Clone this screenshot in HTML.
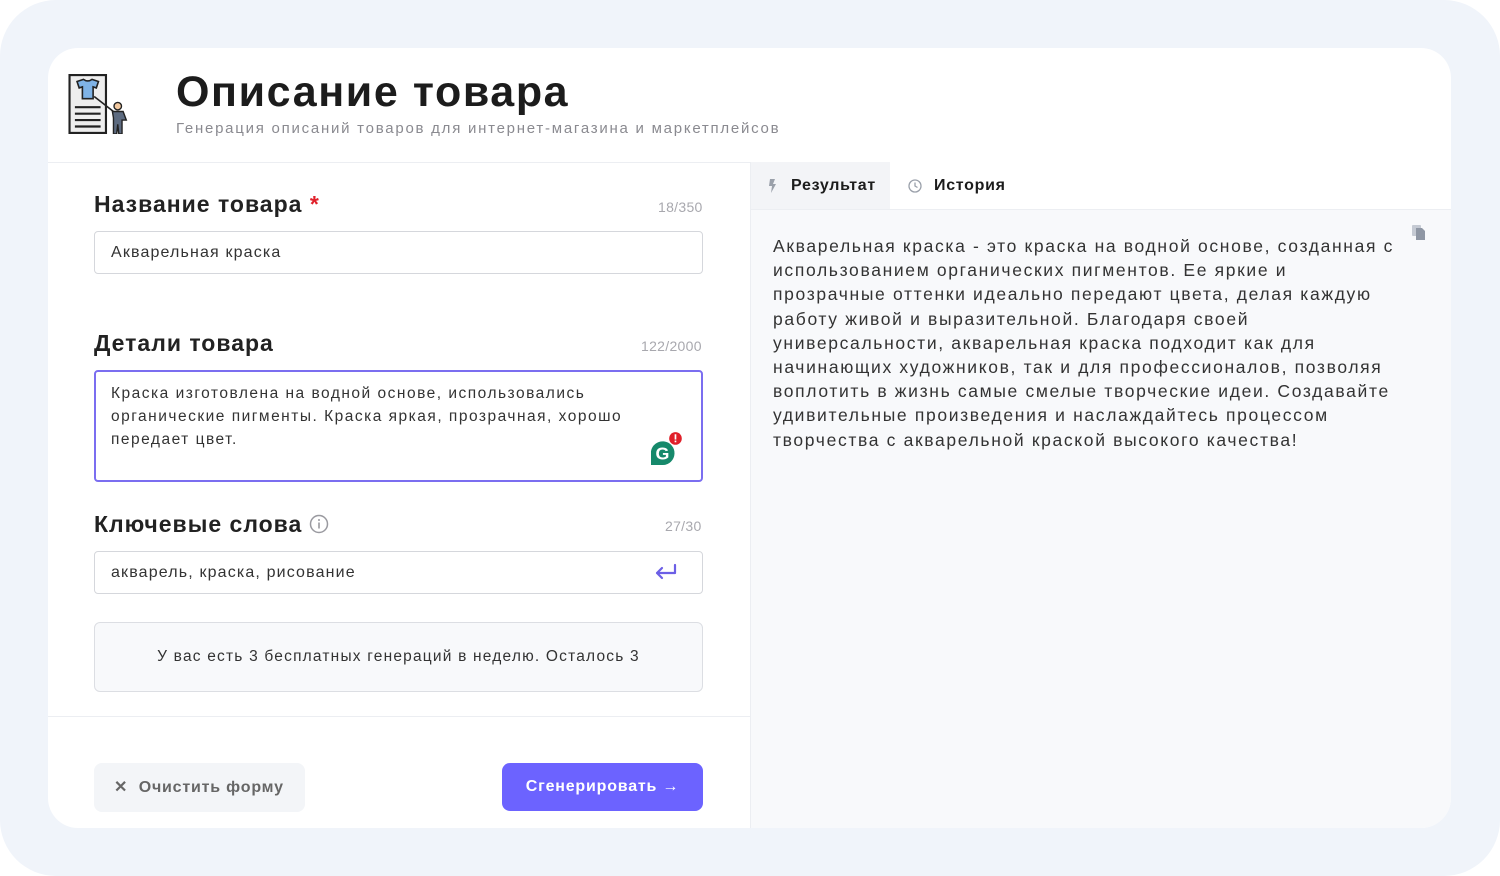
<!DOCTYPE html>
<html><head><meta charset="utf-8"><style>
*{margin:0;padding:0;box-sizing:border-box}
body{width:1500px;height:876px;background:#fff;font-family:"Liberation Sans",sans-serif;color:#222;position:relative;overflow:hidden}
.frame{position:absolute;left:0;top:0;width:1500px;height:876px;background:#f0f4fa;border-radius:56px}
.card{position:absolute;left:48px;top:48px;width:1403px;height:780px;background:#fff;border-radius:30px;overflow:hidden}
.abs{position:absolute}
.right{position:absolute;left:702px;top:114px;width:701px;height:666px;background:#f8f9fb;border-left:1px solid #eceef2}
.h2{font-size:23px;font-weight:bold;color:#222;letter-spacing:1px}
.cnt{font-size:14px;color:#a8a8ae;letter-spacing:0.3px}
.inp{position:absolute;border:1px solid #d5d7dc;border-radius:4px;background:#fff;font-size:16px;letter-spacing:1.15px;color:#333;padding-left:16px}
</style></head><body>
<div class="frame"></div>
<div class="card">
  <svg class="abs" style="left:20px;top:26px" width="62" height="60" viewBox="2 1 57 56">
    <rect x="3" y="2" width="34" height="54" fill="#eee" stroke="#222" stroke-width="2"/>
    <path d="M10 8 L16 6 Q20 9 24 6 L30 8 L28 14 L25 13 L25 24 L15 24 L15 13 L12 14 Z" fill="#7fb3e6" stroke="#222" stroke-width="1.5"/>
    <line x1="8" y1="32" x2="32" y2="32" stroke="#222" stroke-width="2"/>
    <line x1="8" y1="38" x2="32" y2="38" stroke="#222" stroke-width="2"/>
    <line x1="8" y1="44" x2="32" y2="44" stroke="#222" stroke-width="2"/>
    <line x1="8" y1="50" x2="32" y2="50" stroke="#222" stroke-width="2"/>
    <line x1="26" y1="22" x2="44" y2="36" stroke="#222" stroke-width="1.5"/>
    <circle cx="48" cy="31" r="3.5" fill="#f3c9a0" stroke="#222" stroke-width="1.3"/>
    <path d="M43 36 L53 36 L56 44 L52 44 L52 57 L49 57 L48 48 L47 57 L44 57 L44 42 Z" fill="#5d6b80" stroke="#222" stroke-width="1.3"/>
  </svg>
  <div class="abs" style="left:128px;top:20px;font-size:43px;font-weight:bold;color:#1c1c1c;letter-spacing:1.6px">Описание товара</div>
  <div class="abs" style="left:128px;top:72px;font-size:15px;color:#8a8a90;letter-spacing:1.75px">Генерация описаний товаров для интернет-магазина и маркетплейсов</div>
  <div class="abs" style="left:0;top:114px;width:1403px;height:1px;background:#eceef2"></div>

  <div class="abs h2" style="left:46px;top:143px">Название товара <span style="color:#e0202a">*</span></div>
  <div class="abs cnt" style="left:610px;top:151px">18/350</div>
  <div class="inp" style="left:46px;top:183px;width:609px;height:43px;line-height:41px">Акварельная краска</div>

  <div class="abs h2" style="left:46px;top:282px">Детали товара</div>
  <div class="abs cnt" style="left:593px;top:290px">122/2000</div>
  <div class="inp" style="left:46px;top:322px;width:609px;height:112px;border:2px solid #7b6ef0;padding-top:10px;padding-left:15px;line-height:23px;font-size:15.5px;letter-spacing:1.5px">Краска изготовлена на водной основе, использовались<br>органические пигменты. Краска яркая, прозрачная, хорошо<br>передает цвет.</div>
  <svg class="abs" style="left:598px;top:382px" width="40" height="38" viewBox="0 0 38 36">
    <path d="M16 34 L4 34 L4 20 A12 12 0 1 1 16 34 Z" fill="#16896b" stroke="#fff" stroke-width="1.5"/>
    <text x="9" y="28" font-family="Liberation Sans" font-weight="bold" font-size="17" fill="#fff">G</text>
    <circle cx="28" cy="8" r="6" fill="#e0202a"/>
    <rect x="27.2" y="4" width="1.6" height="5" fill="#fff"/><rect x="27.2" y="10" width="1.6" height="1.6" fill="#fff"/>
  </svg>

  <div class="abs h2" style="left:46px;top:463px">Ключевые слова</div>
  <svg class="abs" style="left:261px;top:466px" width="20" height="20" viewBox="0 0 20 20"><circle cx="10" cy="10" r="8.5" fill="none" stroke="#9a9aa0" stroke-width="1.5"/><rect x="9.2" y="8.5" width="1.6" height="6" fill="#9a9aa0"/><circle cx="10" cy="6" r="1" fill="#9a9aa0"/></svg>
  <div class="abs cnt" style="left:617px;top:470px">27/30</div>
  <div class="inp" style="left:46px;top:503px;width:609px;height:43px;line-height:41px">акварель, краска, рисование</div>
  <svg class="abs" style="left:606px;top:514px" width="24" height="20" viewBox="0 0 24 20"><path d="M21 3 V11 H3 M8 6 L3 11 L8 16" fill="none" stroke="#6c5fe6" stroke-width="2.2" stroke-linecap="round" stroke-linejoin="round"/></svg>

  <div class="abs" style="left:46px;top:574px;width:609px;height:70px;border:1px solid #dcdee3;border-radius:6px;background:#f8f9fb;text-align:center;line-height:68px;font-size:15.5px;color:#333;letter-spacing:1.2px">У вас есть 3 бесплатных генераций в неделю. Осталось 3</div>

  <div class="abs" style="left:0;top:668px;width:702px;height:1px;background:#eceef2"></div>
  <div class="abs" style="left:46px;top:715px;width:211px;height:49px;background:#f3f5f8;border-radius:8px;font-size:16px;font-weight:bold;color:#666;line-height:49px;padding-left:20px;letter-spacing:0.8px">✕&nbsp; Очистить форму</div>
  <div class="abs" style="left:454px;top:715px;width:201px;height:48px;background:#6c63ff;border-radius:8px;font-size:16px;font-weight:bold;color:#fff;line-height:48px;text-align:center;letter-spacing:0.8px">Сгенерировать →</div>

  <div class="right">
    <div class="abs" style="left:0;top:0;width:139px;height:48px;background:#f3f4f7"></div>
    <div class="abs" style="left:139px;top:0;width:562px;height:48px;background:#fff"></div>
    <div class="abs" style="left:0;top:47px;width:701px;height:1px;background:#eceef2"></div>
    <svg class="abs" style="left:17px;top:17px" width="8" height="14" viewBox="0 0 8 14"><path d="M2 0 H7 L5 5 H8 L3 14 L4 7 H1 Z" fill="#9aa0aa"/></svg>
    <div class="abs" style="left:40px;top:15px;font-size:16px;font-weight:bold;color:#1c1c1c;letter-spacing:0.7px">Результат</div>
    <svg class="abs" style="left:157px;top:17px" width="14" height="14" viewBox="0 0 14 14"><circle cx="7" cy="7" r="6" fill="none" stroke="#9aa0aa" stroke-width="1.3"/><path d="M7 3.5 V7 L9.5 8.5" fill="none" stroke="#9aa0aa" stroke-width="1.3"/></svg>
    <div class="abs" style="left:183px;top:15px;font-size:16px;font-weight:bold;color:#1c1c1c;letter-spacing:0.7px">История</div>
    <svg class="abs" style="left:660px;top:62px" width="16" height="17" viewBox="0 0 16 17"><rect x="1" y="1" width="9" height="11" rx="1" fill="#c5cad3"/><path d="M5 4 H11 L14 7 V16 H5 Z" fill="#8f97a4"/></svg>
    <div class="abs" style="left:22px;top:72px;font-size:17.5px;line-height:24.2px;color:#333;letter-spacing:1.65px;white-space:nowrap">Акварельная краска - это краска на водной основе, созданная с<br>использованием органических пигментов. Ее яркие и<br>прозрачные оттенки идеально передают цвета, делая каждую<br>работу живой и выразительной. Благодаря своей<br>универсальности, акварельная краска подходит как для<br>начинающих художников, так и для профессионалов, позволяя<br>воплотить в жизнь самые смелые творческие идеи. Создавайте<br>удивительные произведения и наслаждайтесь процессом<br>творчества с акварельной краской высокого качества!</div>
  </div>
</div>
</body></html>
